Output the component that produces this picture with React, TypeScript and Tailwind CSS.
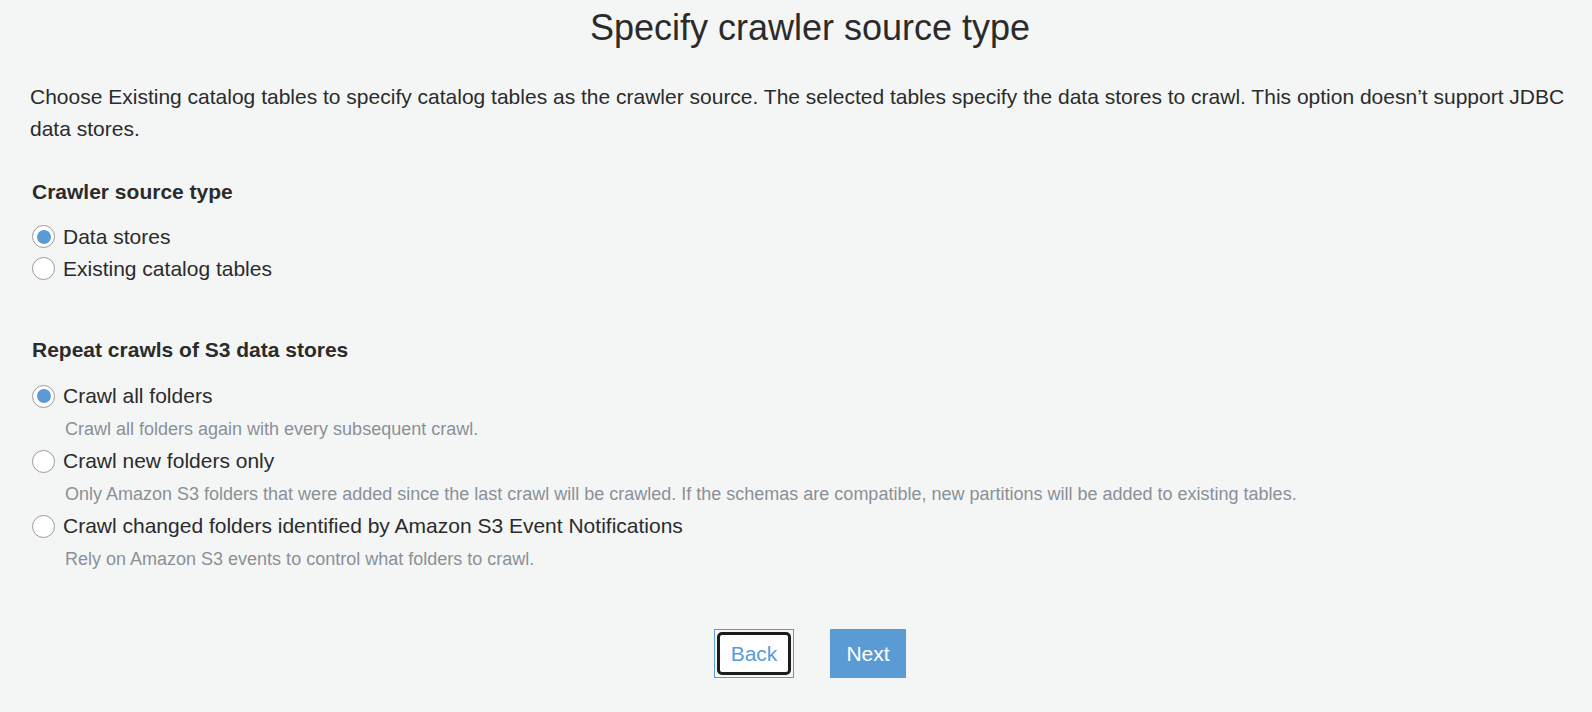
import React from 'react';

interface RadioOptionProps {
  label: string;
  description?: string;
  checked?: boolean;
}

const RadioDot: React.FC<{ checked?: boolean }> = ({ checked }) => (
  <span className="flex h-[23px] w-[23px] shrink-0 items-center justify-center rounded-full border border-[#9a9a9a] bg-white">
    {checked && <span className="h-[14px] w-[14px] rounded-full bg-[#5a9bd6]" />}
  </span>
);

const RadioOption: React.FC<RadioOptionProps> = ({ label, description, checked }) => (
  <div className={description ? 'mb-[4px]' : ''}>
    <label className="flex h-[32px] cursor-pointer items-center gap-[8px] text-[21px] leading-[25.5px] text-[#2b2b2b]">
      <RadioDot checked={checked} />
      <span>{label}</span>
    </label>
    {description && (
      <div className="pl-[33px] pt-[5px] text-[18px] leading-[24px] text-[#8a9096]">{description}</div>
    )}
  </div>
);

const repeatOptions: RadioOptionProps[] = [
  {
    label: 'Crawl all folders',
    description: 'Crawl all folders again with every subsequent crawl.',
    checked: true
  },
  {
    label: 'Crawl new folders only',
    description:
      'Only Amazon S3 folders that were added since the last crawl will be crawled. If the schemas are compatible, new partitions will be added to existing tables.'
  },
  {
    label: 'Crawl changed folders identified by Amazon S3 Event Notifications',
    description: 'Rely on Amazon S3 events to control what folders to crawl.'
  }
];

export default function App() {
  return (
    <div
      className="min-h-[712px] w-full bg-[#f4f6f6] pl-[30px] pr-[2px] pt-[7px] text-[#2b2b2b]"
      style={{ fontFamily: '"Liberation Sans", Arial, sans-serif' }}
    >
      <h1 className="text-center text-[36px] leading-[42px] font-normal">Specify crawler source type</h1>

      <p className="mt-[32px] text-[21px] leading-[31.5px]">
        Choose Existing catalog tables to specify catalog tables as the crawler source. The selected tables specify the
        data stores to crawl. This option doesn’t support JDBC data stores.
      </p>

      <h2 className="mt-[35px] pl-[2px] text-[21px] leading-[25.5px] font-bold">Crawler source type</h2>
      <div className="mt-[16px] pl-[2px]">
        <RadioOption label="Data stores" checked />
        <RadioOption label="Existing catalog tables" />
      </div>

      <h2 className="mt-[52px] pl-[2px] text-[21px] leading-[25.5px] font-bold">Repeat crawls of S3 data stores</h2>
      <div className="mt-[18px] pl-[2px]">
        {repeatOptions.map((opt) => (
          <RadioOption key={opt.label} {...opt} />
        ))}
      </div>

      <div className="mt-[58px] flex items-center justify-center gap-[36px]">
        <span className="border border-[#5a9bd6] p-[2px]">
          <button className="block h-[43px] w-[74px] rounded-[5px] border-[3px] border-[#1c1c1c] bg-white text-[21px] text-[#5a9bd6]">
            Back
          </button>
        </span>
        <button className="h-[49px] w-[76px] bg-[#5a9bd6] text-[21px] text-white">Next</button>
      </div>
    </div>
  );
}
